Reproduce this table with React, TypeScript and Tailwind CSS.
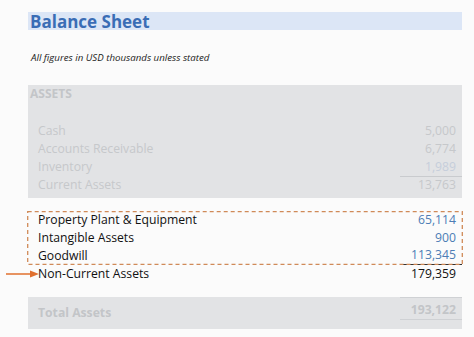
import React from "react";

const font = { fontFamily: '"Open Sans", "Liberation Sans", sans-serif' };

function Row({ label, value, valueClass = "", labelClass = "", cellClass = "" }: { label: string; value: string; valueClass?: string; labelClass?: string; cellClass?: string }) {
  return (
    <div className="flex h-[18px] items-center">
      <div className={`flex-1 pl-[10px] ${labelClass}`}>{label}</div>
      <div className={`flex h-[18px] w-[62px] items-center justify-end pr-[6px] ${cellClass} ${valueClass}`}>{value}</div>
    </div>
  );
}

export default function App() {
  return (
    <div className="h-[337px] w-[474px] bg-[#fbfbfb] pt-[12px] text-[12.2px] leading-none" style={font}>
      <div className="ml-[28px] w-[434px]">
        <div className="flex h-[18px] items-center bg-[#dce6f6] pl-[2px] text-[17px] font-bold text-[#3a6db5]">Balance Sheet</div>
        <div className="mt-[23px] pl-[3px] text-[9.7px] italic text-[#1a1a1a]">All figures in USD thousands unless stated</div>
        <div className="mt-[22px] h-[113px] bg-[#e2e3e5] text-[#c6c8cb]">
          <div className="flex h-[18px] items-center pl-[2px] text-[12px] font-bold text-[#c3c5c8]">ASSETS</div>
          <div className="mt-[19px]">
            <Row label="Cash" value="5,000" />
            <Row label="Accounts Receivable" value="6,774" />
            <Row label="Inventory" value="1,989" valueClass="text-[#c6cedb]" />
            <Row label="Current Assets" value="13,763" cellClass="border-t border-[#c9cbce]" />
          </div>
        </div>
        <div className="relative mt-[13px] text-[#111]">
          <Row label="Property Plant & Equipment" value="65,114" valueClass="text-[#4d7db5]" />
          <Row label="Intangible Assets" value="900" valueClass="text-[#4d7db5]" />
          <Row label="Goodwill" value="113,345" valueClass="text-[#4d7db5]" cellClass="border-b border-[#333] w-[52px]" />
          <Row label="Non-Current Assets" value="179,359" />
          <svg className="pointer-events-none absolute left-[-1px] top-0" width="436" height="54" viewBox="0 0 436 54">
            <rect x="0.7" y="0.7" width="434.6" height="52.6" fill="none" stroke="#d08a58" strokeWidth="1.3" strokeDasharray="4 3" />
          </svg>
          <svg className="absolute left-[-22px] top-[58px]" width="34" height="10" viewBox="0 0 34 10">
            <line x1="0" y1="5" x2="26" y2="5" stroke="#e0702e" strokeWidth="1.5" />
            <polygon points="24,1.5 33,5 24,8.5" fill="#e0702e" />
          </svg>
        </div>
        <div className="mt-[14px] flex h-[32px] bg-[#e2e3e5] text-[#c3c5c8]">
          <div className="flex flex-1 items-center pl-[10px] pt-[1px] font-bold">Total Assets</div>
          <div className="flex h-[23px] w-[62px] items-center justify-end border-b border-t border-[#cfd1d4] pr-[6px] pt-[3px] font-bold">193,122</div>
        </div>
      </div>
    </div>
  );
}
